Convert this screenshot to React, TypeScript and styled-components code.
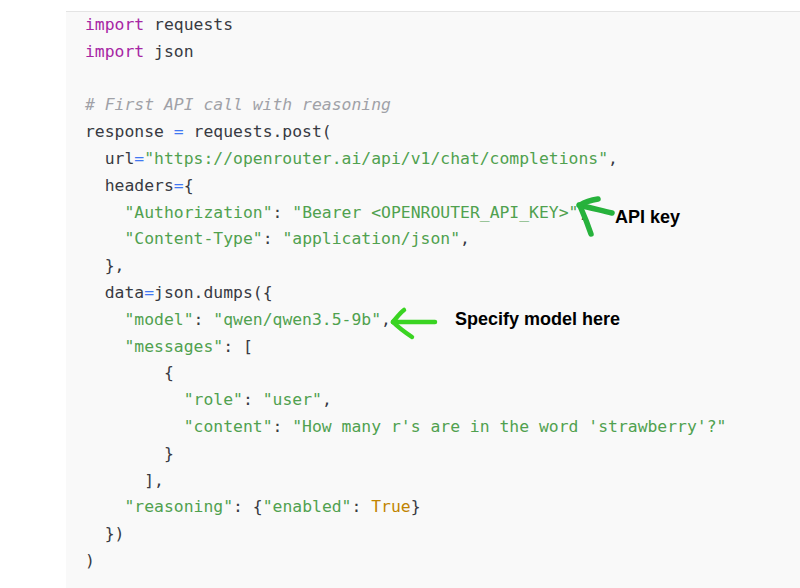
import React from "react";
import styled, { createGlobalStyle } from "styled-components";

const Global = createGlobalStyle`
  html, body { margin: 0; padding: 0; background: #ffffff; }
  body { width: 800px; height: 588px; overflow: hidden; }
`;

const Page = styled.div`
  display: flex;
  padding: 11px 0 0 66px;
  height: 588px;
  box-sizing: border-box;
`;

const CodeBlock = styled.div`
  position: relative;
  flex: 1;
  background: #f9f9f9;
  border-top: 1px solid #e4e4e4;
  padding: 0 0 0 19px;
  font-family: "DejaVu Sans Mono", "Liberation Mono", monospace;
  font-size: 16.4px;
  color: #383a42;
`;

const Line = styled.div`
  white-space: pre;
  height: 26.8px;
  line-height: 26.8px;
`;

const Kw = styled.span`color: #a626a4;`;
const Str = styled.span`color: #50a14f;`;
const Com = styled.span`color: #a0a1a7; font-style: italic;`;
const Op = styled.span`color: #4078f2;`;
const Lit = styled.span`color: #c18401;`;

const Label = styled.span<{ $x: number; $y: number }>`
  position: absolute;
  left: ${(p) => p.$x}px;
  top: ${(p) => p.$y}px;
  font-family: "Liberation Sans", Arial, sans-serif;
  font-weight: bold;
  font-size: 18px;
  color: #000;
  white-space: nowrap;
`;

const Overlay = styled.svg`
  position: absolute;
  left: -66px;
  top: -12px;
  width: 800px;
  height: 588px;
  pointer-events: none;
`;

export default function App() {
  return (
    <>
      <Global />
      <Page>
        <CodeBlock>
          <Line><Kw>import</Kw> requests</Line>
          <Line><Kw>import</Kw> json</Line>
          <Line> </Line>
          <Line><Com># First API call with reasoning</Com></Line>
          <Line>response <Op>=</Op> requests.post(</Line>
          <Line>  url<Op>=</Op><Str>"https://openrouter.ai/api/v1/chat/completions"</Str>,</Line>
          <Line>  headers<Op>=</Op>{"{"}</Line>
          <Line>    <Str>"Authorization"</Str>: <Str>"Bearer &lt;OPENROUTER_API_KEY&gt;"</Str>,</Line>
          <Line>    <Str>"Content-Type"</Str>: <Str>"application/json"</Str>,</Line>
          <Line>  {"},"}</Line>
          <Line>  data<Op>=</Op>json.dumps{"({"}</Line>
          <Line>    <Str>"model"</Str>: <Str>"qwen/qwen3.5-9b"</Str>,</Line>
          <Line>    <Str>"messages"</Str>: [</Line>
          <Line>        {"{"}</Line>
          <Line>          <Str>"role"</Str>: <Str>"user"</Str>,</Line>
          <Line>          <Str>"content"</Str>: <Str>"How many r's are in the word 'strawberry'?"</Str></Line>
          <Line>        {"}"}</Line>
          <Line>      ],</Line>
          <Line>    <Str>"reasoning"</Str>: {"{"}<Str>"enabled"</Str>: <Lit>True</Lit>{"}"}</Line>
          <Line>  {"})"}</Line>
          <Line>)</Line>
          <Overlay viewBox="0 0 800 588">
            <g fill="none" stroke="#27b23c" strokeWidth="5.5" strokeLinecap="round" strokeLinejoin="round">
              <path d="M612 213 C600 210 590 208 579 205" />
              <path d="M580 205 C585 202 592 200 598 199" />
              <path d="M580 206 C584 215 588 225 591 234" />
            </g>
            <g fill="none" stroke="#3ad422" strokeWidth="4.5" strokeLinecap="round" strokeLinejoin="round">
              <path d="M435 322 L393 322" />
              <path d="M393 322 C397 317 400 313 404 310" />
              <path d="M393 322 C399 328 406 333 412 337" />
            </g>
          </Overlay>
          <Label $x={549} $y={195}>API key</Label>
          <Label $x={389} $y={297}>Specify model here</Label>
        </CodeBlock>
      </Page>
    </>
  );
}
